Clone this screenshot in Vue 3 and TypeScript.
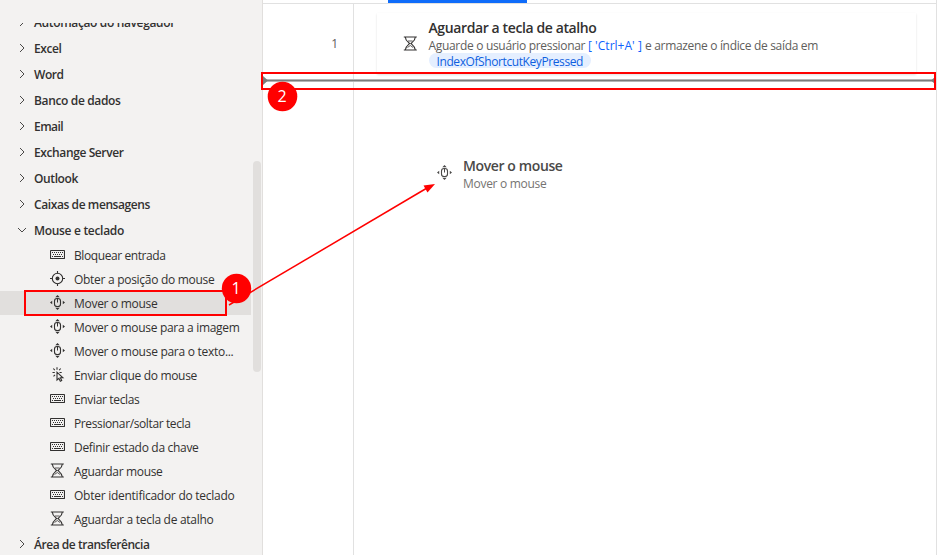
<script setup lang="ts">
import type { Directive } from 'vue'

type IconName = 'keyboard' | 'target' | 'move' | 'click' | 'hourglass'
interface Action { label: string; icon: IconName; width: number; selected?: boolean }
interface Category { label: string; width: number; actions?: Action[] }

// Spreads the letters of a label evenly over the given width.
const vFit: Directive<HTMLElement, number> = {
  mounted(el, { value }) {
    const natural = el.getBoundingClientRect().width
    const count = (el.textContent ?? '').length
    el.style.letterSpacing = `${(value - natural) / count}px`
  },
}

const categories: Category[] = [
  { label: 'Automação do navegador', width: 141 },
  { label: 'Excel', width: 27.5 },
  { label: 'Word', width: 29.5 },
  { label: 'Banco de dados', width: 86.5 },
  { label: 'Email', width: 29 },
  { label: 'Exchange Server', width: 89.5 },
  { label: 'Outlook', width: 44 },
  { label: 'Caixas de mensagens', width: 116 },
  {
    label: 'Mouse e teclado',
    width: 90,
    actions: [
      { label: 'Bloquear entrada', icon: 'keyboard', width: 91.5 },
      { label: 'Obter a posição do mouse', icon: 'target', width: 140.5 },
      { label: 'Mover o mouse', icon: 'move', width: 83.5, selected: true },
      { label: 'Mover o mouse para a imagem', icon: 'move', width: 165.5 },
      { label: 'Mover o mouse para o texto...', icon: 'move', width: 159.5 },
      { label: 'Enviar clique do mouse', icon: 'click', width: 123 },
      { label: 'Enviar teclas', icon: 'keyboard', width: 65.5 },
      { label: 'Pressionar/soltar tecla', icon: 'keyboard', width: 116.5 },
      { label: 'Definir estado da chave', icon: 'keyboard', width: 124.5 },
      { label: 'Aguardar mouse', icon: 'hourglass', width: 88.5 },
      { label: 'Obter identificador do teclado', icon: 'keyboard', width: 160.5 },
      { label: 'Aguardar a tecla de atalho', icon: 'hourglass', width: 139.5 },
    ],
  },
  { label: 'Área de transferência', width: 115.5 },
]
</script>

<template>
  <div class="app">
    <svg class="defs" width="0" height="0" aria-hidden="true">
      <symbol id="keyboard" viewBox="0 0 15 15">
        <rect x=".5" y="3.5" width="14" height="8" rx=".5" fill="none" stroke="currentColor" stroke-width="1.1" />
        <path d="M2 5.500h11M3 7.500h10" stroke="currentColor" stroke-width="1" stroke-dasharray="1 1" />
        <path d="M2 9.500h1M4 9.500h7M12 9.500h1" stroke="currentColor" stroke-width="1" />
      </symbol>
      <symbol id="target" viewBox="0 0 15 15">
        <circle cx="7.5" cy="7.5" r="5.200" fill="none" stroke="currentColor" stroke-width="1.100" />
        <circle cx="7.5" cy="7.5" r="2" fill="currentColor" />
        <path d="M7.500 0v2.500M7.500 12.500v2.500M0 7.500h2.500M12.500 7.500h2.500" stroke="currentColor" stroke-width="1.100" />
      </symbol>
      <symbol id="move" viewBox="0 0 15 15">
        <rect x="4.500" y="3.500" width="6" height="8" rx="2.600" fill="none" stroke="currentColor" stroke-width="1.100" />
        <path d="M7.500 3.500v4" stroke="currentColor" stroke-width="1" />
        <path d="M7.500 0 9.700 2.200H5.300zM7.500 15l2.200-2.200H5.300zM0 7.500 2.200 5.700v3.600zM15 7.500l-2.200-1.800v3.600z" fill="currentColor" />
      </symbol>
      <symbol id="click" viewBox="0 0 15 15">
        <path d="M7 5.200v7.800l1.900-1.700 1.400 2.900 1.400-.7-1.300-2.700h2.500z" fill="none" stroke="currentColor" stroke-width="1.100" />
        <path d="M7 .3v2.400M3.300 1.500l1.500 1.700M10.700 1.500 9.200 3.200M2.500 5.500h2.300M9.500 5.500h2.200M3.500 9.300l1.500-1.500" stroke="currentColor" stroke-width="1.100" />
      </symbol>
      <symbol id="hourglass" viewBox="0 0 15 15">
        <path d="M.8 1h13M.8 14h13" stroke="currentColor" stroke-width="1.200" />
        <path d="M2.300 1C2.300 4.500 5 6 6.600 7.500 5 9 2.300 10.500 2.300 14M12.300 1C12.300 4.500 9.600 6 8 7.500 9.600 9 12.300 10.500 12.300 14" fill="none" stroke="currentColor" stroke-width="1.100" />
        <path d="M5 5h4.600M4.500 11.500 7.300 9.500l2.800 2" fill="none" stroke="currentColor" stroke-width=".8" />
      </symbol>
    </svg>

    <aside class="sidebar">
      <div class="viewport">
        <div class="tree">
          <template v-for="cat in categories" :key="cat.label">
            <div class="category">
              <svg class="chevron" :class="{ open: cat.actions }" viewBox="0 0 10 10">
                <path d="M3 1 7 5 3 9" />
              </svg>
              <span v-fit="cat.width">{{ cat.label }}</span>
            </div>
            <div
              v-for="action in cat.actions"
              :key="action.label"
              class="action"
              :class="{ selected: action.selected }"
            >
              <svg class="icon"><use :href="`#${action.icon}`" /></svg>
              <span v-fit="action.width">{{ action.label }}</span>
            </div>
          </template>
        </div>
      </div>
      <div class="scroll"><div class="thumb"></div></div>
    </aside>

    <main class="main">
      <div class="tabs"><div class="tab"></div></div>
      <div class="canvas">
        <div class="gutter"><span>1</span></div>
        <div class="steps">
          <section class="card">
            <svg class="icon"><use href="#hourglass" /></svg>
            <div class="body">
              <div class="title"><span v-fit="168">Aguardar a tecla de atalho</span></div>
              <div class="desc">
                <span v-fit="159.5">Aguarde o usuário pressionar&nbsp;</span><span v-fit="57" class="link">[ 'Ctrl+A' ]&nbsp;</span><span v-fit="173">e armazene o índice de saída em</span>
              </div>
              <div class="pill"><span v-fit="146.5">IndexOfShortcutKeyPressed</span></div>
            </div>
          </section>
        </div>
      </div>
    </main>

    <div class="drag">
      <svg class="icon"><use href="#move" /></svg>
      <div>
        <div class="title"><span v-fit="99.5">Mover o mouse</span></div>
        <div class="desc"><span v-fit="83.5">Mover o mouse</span></div>
      </div>
    </div>

    <svg class="overlay" viewBox="0 0 937 555">
      <rect x="263" y="79" width="672" height="3" fill="#b5b5b5" />
      <path d="M263 80.500h672" stroke="#7b7b7b" stroke-width="1" />
      <path d="M263 76l5 4.500-5 4.500zM935 77l-4 3.500 4 3.500z" fill="#7b7b7b" />
      <rect x="262" y="73" width="673" height="16" fill="none" stroke="#f00" stroke-width="2" />
      <rect x="25" y="291" width="201" height="24" fill="none" stroke="#f00" stroke-width="2" />
      <path d="M229 305 427 188" stroke="#f00" stroke-width="1.500" />
      <path d="M435 184l-7.500 8.500-4-7z" fill="#f00" />
      <circle cx="236.500" cy="288.500" r="14.700" fill="#f00" />
      <circle cx="282.500" cy="96.500" r="14.800" fill="#f00" />
    </svg>
    <div class="badge one">1</div>
    <div class="badge two">2</div>
  </div>
</template>

<style>
body {
  margin: 0;
  overflow: hidden;
}
</style>

<style scoped>
.app {
  position: relative;
  display: flex;
  width: 937px;
  height: 555px;
  overflow: hidden;
  background: #fff;
  color: #323130;
  font: 12px 'Open Sans', 'Noto Sans', sans-serif;
  white-space: nowrap;
}
.defs {
  position: absolute;
}
.sidebar {
  display: flex;
  box-sizing: border-box;
  width: 263px;
  padding-top: 23px;
  border-right: 1px solid #e1dfdd;
  background: #f3f2f1;
}
.viewport {
  width: 251px;
  height: 532px;
  overflow: hidden;
}
.tree {
  margin-top: -14px;
}
.category {
  display: flex;
  align-items: center;
  gap: 7px;
  height: 26px;
  padding-left: 17px;
  font-weight: 600;
}
.chevron {
  width: 10px;
  height: 10px;
  fill: none;
  stroke: #4a4948;
  stroke-width: 1;
}
.chevron.open {
  transform: rotate(90deg);
}
.action {
  display: flex;
  align-items: flex-start;
  gap: 9px;
  height: 24px;
  padding-left: 50px;
  line-height: 25px;
}
.action.selected {
  background: #e1dfdd;
}
.icon {
  flex: none;
  width: 15px;
  height: 15px;
}
.action .icon {
  margin-top: 4px;
}
.scroll {
  padding: 138px 0 0 2px;
}
.thumb {
  width: 8px;
  height: 211px;
  border-radius: 4px;
  background: #e1dfdd;
}
.main {
  display: flex;
  flex-direction: column;
  box-sizing: border-box;
  width: 674px;
  border-right: 1px solid #e1e1e1;
}
.tabs {
  height: 3px;
  padding-left: 125px;
  border-bottom: 1px solid #e1e1e1;
}
.tab {
  width: 139px;
  height: 3px;
  background: #0f6cfa;
}
.canvas {
  display: flex;
  flex: 1;
}
.gutter {
  box-sizing: border-box;
  width: 91px;
  padding: 31px 15px 0 0;
  border-right: 1px solid #e1e1e1;
  color: #605e5c;
  text-align: right;
}
.steps {
  padding: 9px 0 0 23px;
}
.card {
  display: flex;
  align-items: flex-start;
  box-sizing: border-box;
  width: 539px;
  height: 61px;
  padding: 6px 0 0 26px;
  box-shadow: 0 1px 2px rgba(0, 0, 0, 0.12);
}
.card .icon {
  margin-top: 17px;
}
.body {
  padding-left: 10.5px;
}
.title {
  height: 18px;
  font-size: 14px;
  font-weight: 600;
  line-height: 18px;
}
.desc {
  height: 16px;
  color: #605e5c;
  line-height: 18px;
}
.link {
  color: #0f62fe;
}
.pill {
  box-sizing: border-box;
  width: 162px;
  height: 15px;
  padding-left: 8px;
  border-radius: 8px;
  background: #e5efff;
  color: #0f5fe0;
  line-height: 18px;
}
.drag {
  position: absolute;
  left: 437px;
  top: 157px;
  display: flex;
  gap: 11px;
  color: #4a4948;
}
.drag .icon {
  margin-top: 8px;
}
.drag .desc {
  color: #757371;
  line-height: 17px;
}
.overlay {
  position: absolute;
  inset: 0;
  width: 937px;
  height: 555px;
}
.badge {
  position: absolute;
  width: 30px;
  height: 30px;
  color: #fff;
  font-size: 16px;
  line-height: 30px;
  text-align: center;
}
.one {
  left: 221px;
  top: 273px;
}
.two {
  left: 267px;
  top: 81px;
}
</style>
